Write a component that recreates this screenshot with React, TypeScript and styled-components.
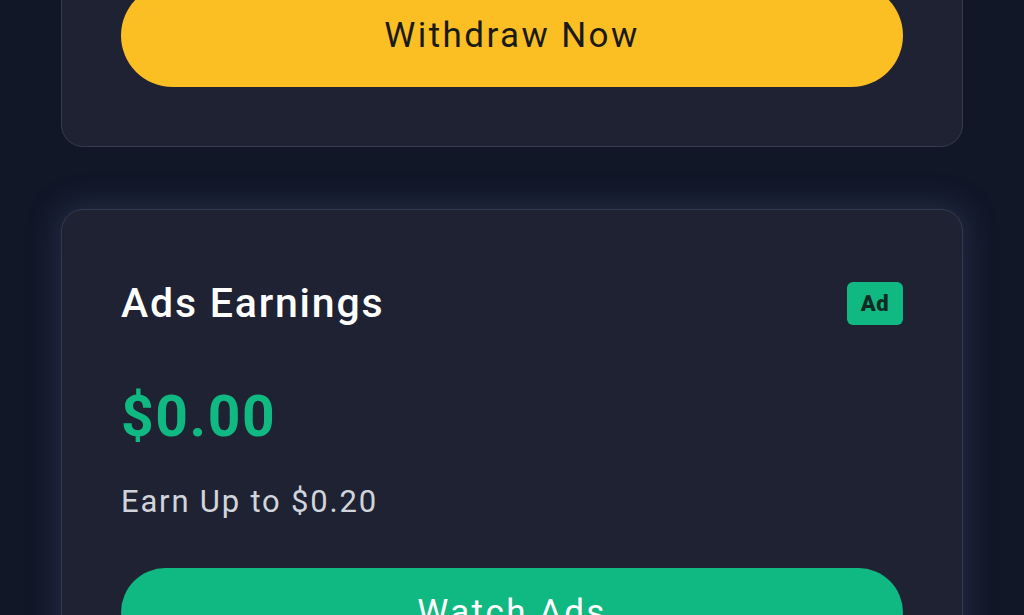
import React from "react";
import styled, { createGlobalStyle } from "styled-components";

const Global = createGlobalStyle`
  html, body {
    margin: 0;
    padding: 0;
    background: #111727;
    overflow: hidden;
    font-family: Roboto, "Noto Sans", Arial, sans-serif;
  }
  * { box-sizing: border-box; }
`;

const Page = styled.div`
  width: 902px;
  margin: -76px auto 0;
  display: flex;
  flex-direction: column;
  gap: 62px;
  padding-bottom: 80px;
`;

const Card = styled.section<{ $glow?: boolean }>`
  background: #1e2232;
  border: 1px solid #353b4f;
  border-radius: 22px;
  padding: 59px 59px 59px;
  display: flex;
  flex-direction: column;
  box-shadow: ${(p) =>
    p.$glow ? "0 0 28px 6px rgba(70, 78, 120, 0.35)" : "none"};
`;

const AdsCard = styled(Card)`
  padding-top: 72px;
`;

const PillButton = styled.button<{ $variant: "yellow" | "green"; $height: number }>`
  width: 100%;
  height: ${(p) => p.$height}px;
  border: none;
  border-radius: 999px;
  background: ${(p) => (p.$variant === "yellow" ? "#fbbf24" : "#10b981")};
  color: ${(p) => (p.$variant === "yellow" ? "#1a1a1a" : "#ffffff")};
  font-family: Roboto, Arial, sans-serif;
  font-size: 35px;
  font-weight: 400;
  letter-spacing: 2.4px;
  display: flex;
  align-items: center;
  justify-content: center;
  cursor: pointer;
`;

const HeaderRow = styled.div`
  display: flex;
  align-items: center;
  justify-content: space-between;
  height: 43px;
`;

const Title = styled.h2`
  margin: 0;
  font-size: 41px;
  line-height: 43px;
  font-weight: 500;
  color: #ffffff;
  letter-spacing: 1.8px;
`;

const Badge = styled.span`
  width: 56px;
  height: 43px;
  border-radius: 6px;
  background: #10b981;
  color: #0f2a22;
  font-size: 22px;
  font-weight: 900;
  letter-spacing: 0.5px;
  display: flex;
  align-items: center;
  justify-content: center;
`;

const Amount = styled.div`
  margin-top: 62px;
  font-size: 57px;
  line-height: 60px;
  font-weight: 700;
  color: #10b981;
  letter-spacing: 1.6px;
`;

const Subtext = styled.div`
  margin-top: 37px;
  font-size: 31px;
  line-height: 36px;
  color: #d1d5db;
  letter-spacing: 1.8px;
`;

const Actions = styled.div`
  margin-top: 48px;
`;

export default function App() {
  return (
    <>
      <Global />
      <Page>
        <Card>
          <PillButton $variant="yellow" $height={103}>
            Withdraw Now
          </PillButton>
        </Card>
        <AdsCard $glow>
          <HeaderRow>
            <Title>Ads Earnings</Title>
            <Badge>Ad</Badge>
          </HeaderRow>
          <Amount>$0.00</Amount>
          <Subtext>Earn Up to $0.20</Subtext>
          <Actions>
            <PillButton $variant="green" $height={89}>
              Watch Ads
            </PillButton>
          </Actions>
        </AdsCard>
      </Page>
    </>
  );
}
